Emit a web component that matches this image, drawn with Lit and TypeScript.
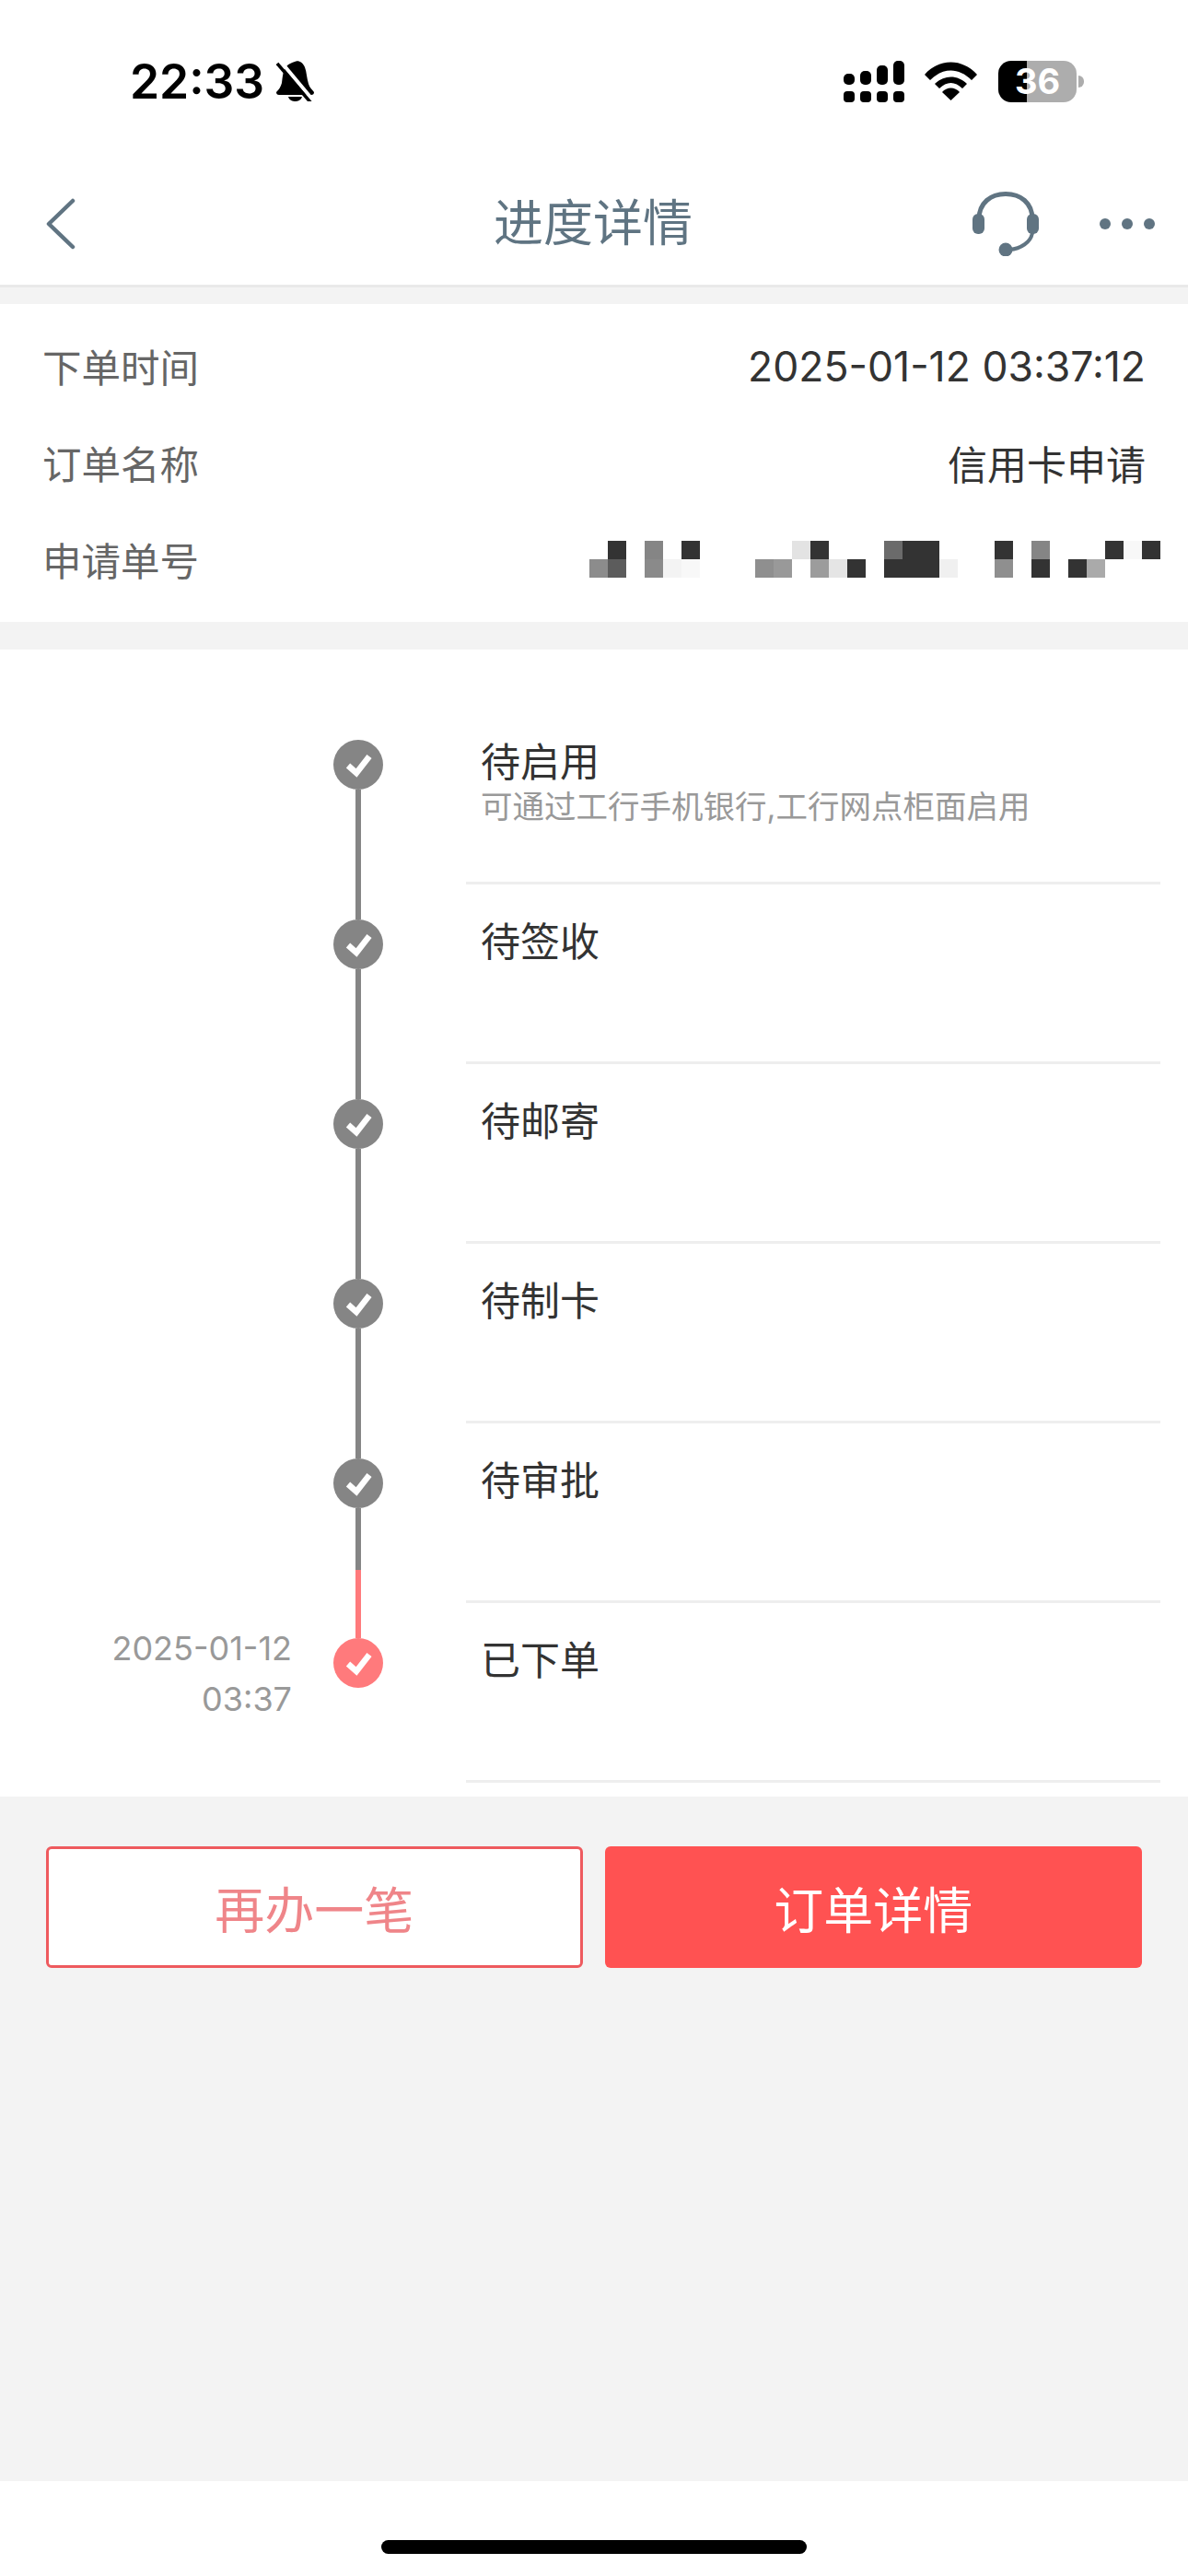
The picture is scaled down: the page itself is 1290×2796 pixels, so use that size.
import { LitElement, html, css, svg } from "lit";
import { customElement } from "lit/decorators.js";

const D = "#333333";
// Mosaic covering the application number: [column, row, colour]
const MOSAIC: [number, number, string][] = [
  [1, 0, D], [3, 0, "#858585"], [5, 0, D], [11, 0, "#e3e3e3"], [12, 0, D], [16, 0, "#6b6b6b"], [17, 0, D], [18, 0, D],
  [22, 0, D], [24, 0, "#858585"], [28, 0, D], [29, 0, "#f8f8f8"], [30, 0, D],
  [0, 1, "#8c8c8c"], [1, 1, "#5c5c5c"], [3, 1, "#8a8a8a"], [4, 1, "#f3f3f3"], [5, 1, "#f8f8f8"], [9, 1, "#8f8f8f"], [10, 1, "#999999"],
  [12, 1, "#9c9c9c"], [13, 1, "#e5e5e5"], [14, 1, D], [16, 1, D], [17, 1, D], [18, 1, D], [19, 1, "#f0f0f0"],
  [22, 1, "#8f8f8f"], [24, 1, D], [26, 1, D], [27, 1, "#aaaaaa"],
];

interface Step { title: string; sub?: string; time?: string[]; cls: string; }
const STEPS: Step[] = [
  { title: "待启用", sub: "可通过工行手机银行,工行网点柜面启用", cls: "first" },
  { title: "待签收", cls: "" },
  { title: "待邮寄", cls: "" },
  { title: "待制卡", cls: "" },
  { title: "待审批", cls: "split" },
  { title: "已下单", time: ["2025-01-12", "03:37"], cls: "last" },
];

const check = svg`<svg class="check" viewBox="0 0 54 54" width="54" height="54"><polyline points="16,28 25,36 39,18" fill="none" stroke="#fff" stroke-width="6.500"/></svg>`;

@customElement("app-root")
export class AppRoot extends LitElement {
  static styles = css`
    :host {
      display: flex;
      flex-direction: column;
      width: 1290px;
      height: 2796px;
      background: #f3f3f3;
      font-family: Inter, "Noto Sans CJK SC", sans-serif;
      overflow: hidden;
    }
    .status {
      height: 176px;
      background: #fff;
      display: flex;
      align-items: center;
      padding: 0 113px 0 141px;
      box-sizing: border-box;
      flex: none;
    }
    .clock {
      font-family: Inter, sans-serif;
      font-weight: 600;
      font-size: 51.500px;
      line-height: 60px;
      color: #000;
    }
    .bell { margin-left: 13px; margin-top: -1px; }
    .sys { margin-left: auto; display: flex; align-items: center; }
    .wifi { margin-left: 22px; }
    .batt {
      margin-left: 23px;
      width: 85px;
      height: 45px;
      border-radius: 14px;
      background: linear-gradient(90deg, #000 31px, #adadad 31px);
      color: #fff;
      font-family: Inter, sans-serif;
      font-weight: 700;
      font-size: 38px;
      line-height: 45px;
      text-align: center;
    }
    .cap { width: 6px; height: 13px; margin-left: 2px; background: #adadad; border-radius: 0 6px 6px 0; }
    .nav {
      height: 136px;
      box-sizing: border-box;
      background: #fff;
      border-bottom: 3px solid #e9e9e9;
      display: grid;
      grid-template-columns: 1fr auto 1fr;
      align-items: center;
      padding: 0 36px;
      flex: none;
    }
    .back { margin-left: 14px; }
    .title { font-size: 54px; line-height: 60px; color: #5f7482; text-align: center; margin-left: -2px; }
    .nav-right { display: flex; align-items: center; justify-content: flex-end; gap: 66px; }
    .info {
      margin-top: 18px;
      background: #fff;
      padding: 15px 46px 15px 46px;
      flex: none;
    }
    .row { height: 105px; display: flex; align-items: center; justify-content: space-between; font-size: 44.500px; }
    .row .k { color: #666; font-size: 42.500px; margin-top: -3px; }
    .row .v { color: #333; }
    .row .cjk { font-size: 43px; margin-top: -2px; }
    .mosaic {
      display: grid;
      grid-template-columns: repeat(31, 20px);
      grid-template-rows: repeat(2, 20px);
      margin: 32px -16px 0 0;
      align-self: flex-start;
    }
    .timeline { margin-top: 30px; background: #fff; padding: 60px 0 15px; flex: none; }
    .step { display: flex; height: 195px; }
    .when {
      width: 317px;
      box-sizing: border-box;
      padding-top: 22px;
      text-align: right;
      font-size: 36px;
      line-height: 55px;
      color: #999;
      flex: none;
    }
    .rail { margin-left: 45px; width: 54px; display: flex; flex-direction: column; align-items: center; flex: none; }
    .seg-top { height: 38px; width: 6px; background: #858585; flex: none; }
    .seg-bottom { flex: 1; width: 6px; background: #858585; }
    .dot { width: 54px; height: 54px; border-radius: 50%; background: #858585; flex: none; display: flex; }
    .first .seg-top { background: transparent; }
    .last .seg-bottom { background: transparent; }
    .last .seg-top { background: #ff7a7c; }
    .last .dot { background: #ff7a7c; }
    .split .seg-bottom { background: linear-gradient(#858585 67px, #ff7a7c 67px); }
    .body {
      margin-left: 90px;
      width: 754px;
      box-sizing: border-box;
      border-bottom: 3px solid #eeeeee;
      padding: 38px 0 0 16px;
    }
    .name { font-size: 43px; line-height: 48px; color: #333; }
    .sub { font-size: 34.500px; line-height: 40px; margin-top: 5px; color: #999; }
    .actions { display: flex; gap: 24px; padding: 54px 50px 0 50px; flex: none; }
    .btn {
      width: 583px;
      height: 132px;
      box-sizing: border-box;
      border-radius: 6px;
      font-size: 54px;
      display: flex;
      align-items: center;
      justify-content: center;
    }
    .ghost { background: #fff; border: 3px solid #ee5a5e; color: #ef8589; }
    .solid { background: #ff5252; color: #fff; width: 584px; }
    .footer { margin-top: auto; height: 103px; background: #fff; display: flex; justify-content: center; flex: none; padding-top: 64px; box-sizing: border-box; }
    .home { width: 462px; height: 15px; border-radius: 8px; background: #000; }
  `;

  render() {
    return html`
      <div class="status">
        <span class="clock">22:33</span>
        <svg class="bell" width="41" height="44" viewBox="0 0 41 44">
          <path d="M20 1C24 -1 29 2 31 7C33 12 33 19 35 25C36 29 39 31 41 34C41 36 40 37 38 37H3C1 37 0 36 0 34C3 31 5 28 6 24C7 17 7 10 12 5C14 3 17 2 20 1Z" fill="#000"/>
          <path d="M13 39H28C27 43 23 44 20.500 44C18 44 14 43 13 39Z" fill="#000"/>
          <line x1="5" y1="1" x2="41" y2="44" stroke="#fff" stroke-width="4"/>
          <line x1="1" y1="3" x2="38" y2="46" stroke="#000" stroke-width="3.500"/>
        </svg>
        <div class="sys">
          <svg width="66" height="45" viewBox="0 0 66 45" fill="#000">
            <rect x="0" y="14" width="12" height="12" rx="5"/><rect x="18" y="11" width="12" height="15" rx="5"/>
            <rect x="36" y="5" width="12" height="21" rx="5"/><rect x="54" y="0" width="12" height="26" rx="5"/>
            <rect x="0" y="33" width="12" height="12" rx="4"/><rect x="18" y="33" width="12" height="12" rx="4"/>
            <rect x="36" y="33" width="12" height="12" rx="4"/><rect x="54" y="33" width="12" height="12" rx="4"/>
          </svg>
          <svg class="wifi" width="57" height="42" viewBox="0 0 57 42" fill="#000">
            <path d="M0 14C16 -4 41 -4 57 14L51 20C37 6 20 6 6 20Z"/>
            <path d="M11 24C21 14 36 14 46 24L41 29C33 21 24 21 16 29Z"/>
            <path d="M19 33C24 27 33 27 38 33L28.500 42Z"/>
          </svg>
          <div class="batt">36</div>
          <div class="cap"></div>
        </div>
      </div>
      <div class="nav">
        <svg class="back" width="32" height="56" viewBox="0 0 32 56"><polyline points="29,3 3,28 29,53" fill="none" stroke="#607482" stroke-width="4.500" stroke-linecap="round" stroke-linejoin="round"/></svg>
        <div class="title">进度详情</div>
        <div class="nav-right">
          <svg width="72" height="70" viewBox="0 0 72 70">
            <path d="M7 30C7 12 20 2.500 36 2.500S65 12 65 30" fill="none" stroke="#607482" stroke-width="5"/>
            <path d="M65 44C64 55 52 62 40 63" fill="none" stroke="#607482" stroke-width="4"/>
            <rect x="0" y="24" width="13" height="22" rx="6" fill="#607482"/>
            <rect x="59" y="24" width="13" height="22" rx="6" fill="#607482"/>
            <circle cx="36" cy="63" r="7.500" fill="#607482"/>
          </svg>
          <svg width="60" height="12" viewBox="0 0 60 12" fill="#607482"><circle cx="6" cy="6" r="6"/><circle cx="30" cy="6" r="6"/><circle cx="54" cy="6" r="6"/></svg>
        </div>
      </div>
      <div class="info">
        <div class="row"><span class="k">下单时间</span><span class="v">2025-01-12 03:37:12</span></div>
        <div class="row"><span class="k">订单名称</span><span class="v cjk">信用卡申请</span></div>
        <div class="row">
          <span class="k">申请单号</span>
          <div class="mosaic">
            ${MOSAIC.map(([c, r, col]) => html`<i style="grid-column:${c + 1};grid-row:${r + 1};background:${col}"></i>`)}
          </div>
        </div>
      </div>
      <div class="timeline">
        ${STEPS.map((s) => html`
          <div class="step ${s.cls}">
            <div class="when">${s.time ? s.time.map((t) => html`<div>${t}</div>`) : ""}</div>
            <div class="rail">
              <div class="seg-top"></div>
              <div class="dot">${check}</div>
              <div class="seg-bottom"></div>
            </div>
            <div class="body">
              <div class="name">${s.title}</div>
              ${s.sub ? html`<div class="sub">${s.sub}</div>` : ""}
            </div>
          </div>
        `)}
      </div>
      <div class="actions">
        <div class="btn ghost">再办一笔</div>
        <div class="btn solid">订单详情</div>
      </div>
      <div class="footer"><div class="home"></div></div>
    `;
  }
}
